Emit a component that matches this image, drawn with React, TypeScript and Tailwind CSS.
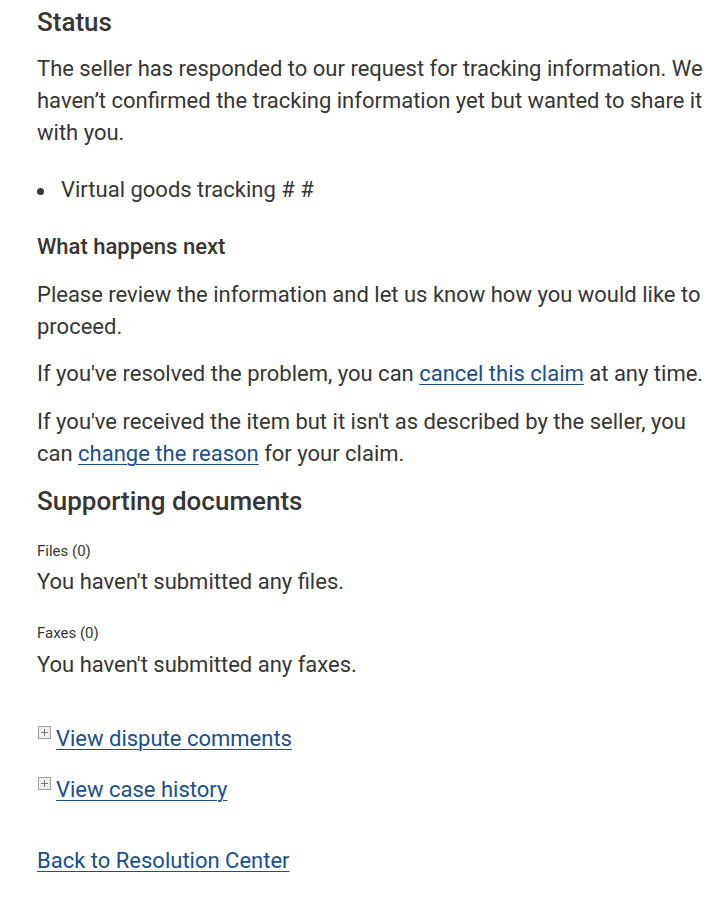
import React from 'react';

const PlusBox: React.FC = () => (
  <span className="inline-block w-[13px] h-[13px] mt-[3px] ml-[1px] mr-[5px] border border-[#a0a0a0] bg-[#f0f0f0] relative shrink-0">
    <span className="absolute left-[2px] top-[5px] w-[7px] h-[1px] bg-[#777777]" />
    <span className="absolute left-[5px] top-[2px] w-[1px] h-[7px] bg-[#777777]" />
  </span>
);

const A: React.FC<{ children: React.ReactNode }> = ({ children }) => (
  <a href="#" className="text-[#1a4f8b] underline underline-offset-[3px] decoration-1">
    {children}
  </a>
);

const App: React.FC = () => {
  return (
    <div
      className="w-[720px] min-h-[903px] bg-white pl-[37px] pr-[12px] pt-[6px] text-[#363636] text-[22px] leading-[32px]"
      style={{ fontFamily: 'Roboto, "Liberation Sans", sans-serif' }}
    >
      <h2 className="text-[26px] leading-[32px] font-medium">Status</h2>
      <p className="mt-[15px]">
        The seller has responded to our request for tracking information. We haven’t confirmed the tracking information yet but wanted to share it with you.
      </p>
      <ul className="mt-[25px]">
        <li className="flex items-center">
          <span className="w-[7px] h-[7px] rounded-full bg-[#363636] mr-[17px] mt-[2px]" />
          <span>Virtual goods tracking # #</span>
        </li>
      </ul>
      <h3 className="mt-[25px] text-[22px] font-medium">What happens next</h3>
      <p className="mt-[16px]">Please review the information and let us know how you would like to proceed.</p>
      <p className="mt-[15px]">
        If you've resolved the problem, you can <A>cancel this claim</A> at any time.
      </p>
      <p className="mt-[16px]">
        If you've received the item but it isn't as described by the seller, you can <A>change the reason</A> for your claim.
      </p>
      <h2 className="mt-[15px] text-[26px] leading-[32px] font-medium">Supporting documents</h2>
      <div className="mt-[25px] text-[15px] leading-[18px]">Files (0)</div>
      <p className="mt-[6px]">You haven't submitted any files.</p>
      <div className="mt-[26px] text-[15px] leading-[18px]">Faxes (0)</div>
      <p className="mt-[7px]">You haven't submitted any faxes.</p>
      <div className="mt-[42px] flex items-start">
        <PlusBox />
        <A>View dispute comments</A>
      </div>
      <div className="mt-[19px] flex items-start">
        <PlusBox />
        <A>View case history</A>
      </div>
      <div className="mt-[39px]">
        <A>Back to Resolution Center</A>
      </div>
    </div>
  );
};

export default App;
